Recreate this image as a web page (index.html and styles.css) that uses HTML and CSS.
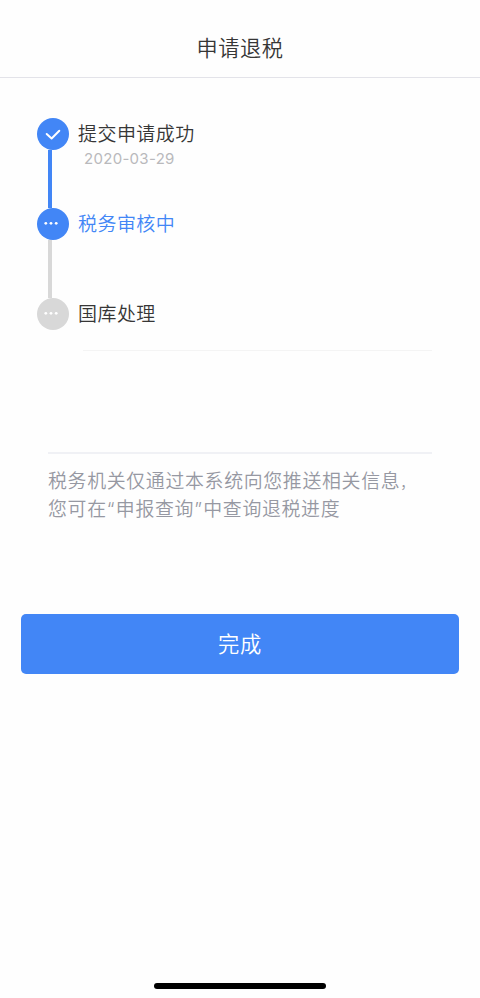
FILE: index.html
```html
<!DOCTYPE html>
<html lang="zh-CN">
<head>
<meta charset="utf-8">
<meta name="viewport" content="width=device-width, initial-scale=1">
<title>申请退税</title>
<link rel="stylesheet" href="styles.css">
</head>
<body>
<div class="screen">
  <header class="header"><h1 class="title">申请退税</h1></header>
  <main class="content">
    <ol class="steps">
      <li class="step">
        <div class="rail">
          <svg class="dot active" viewBox="0 0 32 32"><path class="check" d="M9.7 16 L14.6 20.5 L22.3 12.8"/></svg>
          <span class="line active"></span>
        </div>
        <div class="info">
          <div class="name">提交申请成功</div>
          <div class="date">2020-03-29</div>
        </div>
      </li>
      <li class="step">
        <div class="rail">
          <svg class="dot active" viewBox="0 0 32 32"><g class="more"><circle cx="8.8" cy="15.3" r="1.4"/><circle cx="14" cy="15.3" r="1.4"/><circle cx="19.2" cy="15.3" r="1.4"/></g></svg>
          <span class="line"></span>
        </div>
        <div class="info"><div class="name current">税务审核中</div></div>
      </li>
      <li class="step last">
        <div class="rail">
          <svg class="dot" viewBox="0 0 32 32"><g class="more"><circle cx="8.8" cy="15.3" r="1.4"/><circle cx="14" cy="15.3" r="1.4"/><circle cx="19.2" cy="15.3" r="1.4"/></g></svg>
        </div>
        <div class="info"><div class="name">国库处理</div></div>
      </li>
    </ol>
    <div class="divider"></div>
    <p class="note">税务机关仅通过本系统向您推送相关信息<span class="comma">，</span><br>您可在<span class="quote">“</span>申报查询<span class="quote">”</span>中查询退税进度</p>
    <button class="done" type="button">完成</button>
  </main>
  <div class="home-bar"></div>
</div>
</body>
</html>
```
FILE: styles.css
```css
* {
  box-sizing: border-box;
}

body {
  margin: 0;
  background: #fff;
  font-family: "Noto Sans CJK SC", sans-serif;
  font-weight: 350;
}

.screen {
  display: flex;
  flex-direction: column;
  height: 998px;
  overflow: hidden;
  background: #fefefe;
}

.header {
  height: 78px;
  padding-top: 31px;
  border-bottom: 1px solid #e3e3e9;
  text-align: center;
}

.title {
  margin: 0;
  font-size: 21.2px;
  line-height: 32px;
  font-weight: 350;
  letter-spacing: 0.6px;
  color: #363636;
}

.content {
  flex: 1;
  padding: 40px 21px 0;
}

.steps {
  margin: 0;
  padding: 0 0 0 15.7px;
  list-style: none;
}

.step {
  display: flex;
  gap: 9px;
  height: 90px;
}

.step.last {
  height: 32px;
}

.rail {
  display: flex;
  flex-direction: column;
  width: 32.3px;
}

.dot {
  flex: none;
  width: 32px;
  height: 32px;
  border-radius: 50%;
  background: #d8d8d8;
}

.dot.active,
.line.active {
  background: #4286f6;
}

.check {
  fill: none;
  stroke: #fff;
  stroke-width: 2;
  stroke-linecap: round;
  stroke-linejoin: round;
}

.more {
  fill: #fff;
}

.line {
  flex: 1;
  width: 4px;
  margin-left: 11.3px;
  background: #d8d8d8;
}

.name {
  font-size: 19px;
  line-height: 30px;
  letter-spacing: 0.45px;
  color: #363636;
}

.name.current {
  color: #4286f6;
}

.date {
  padding-left: 6px;
  font-family: Inter, sans-serif;
  font-size: 15px;
  font-weight: 400;
  line-height: 22px;
  letter-spacing: 0.3px;
  color: #b9b9bc;
}

.divider {
  height: 1px;
  margin: 20px 27px 0 62px;
  background: #f4f4f4;
}

.note {
  margin: 101px 27px 0;
  padding-top: 12px;
  border-top: 2px solid #f0f1f5;
  font-size: 18.9px;
  line-height: 28px;
  letter-spacing: 0.68px;
  white-space: nowrap;
  color: #9698a2;
}

.comma {
  font-size: 14px;
  line-height: 1;
}

.quote {
  font-family: Inter, sans-serif;
  letter-spacing: 1.4px;
}

.done {
  display: block;
  width: 438px;
  height: 60px;
  margin-top: 90px;
  padding: 0 0 3px;
  border: 0;
  border-radius: 5px;
  background: #4286f6;
  color: #fff;
  font-family: inherit;
  font-size: 21.3px;
  font-weight: 350;
  letter-spacing: 0.6px;
}

.home-bar {
  width: 172px;
  height: 6px;
  margin: 0 auto 9px;
  border-radius: 3px;
  background: #000;
}
```
